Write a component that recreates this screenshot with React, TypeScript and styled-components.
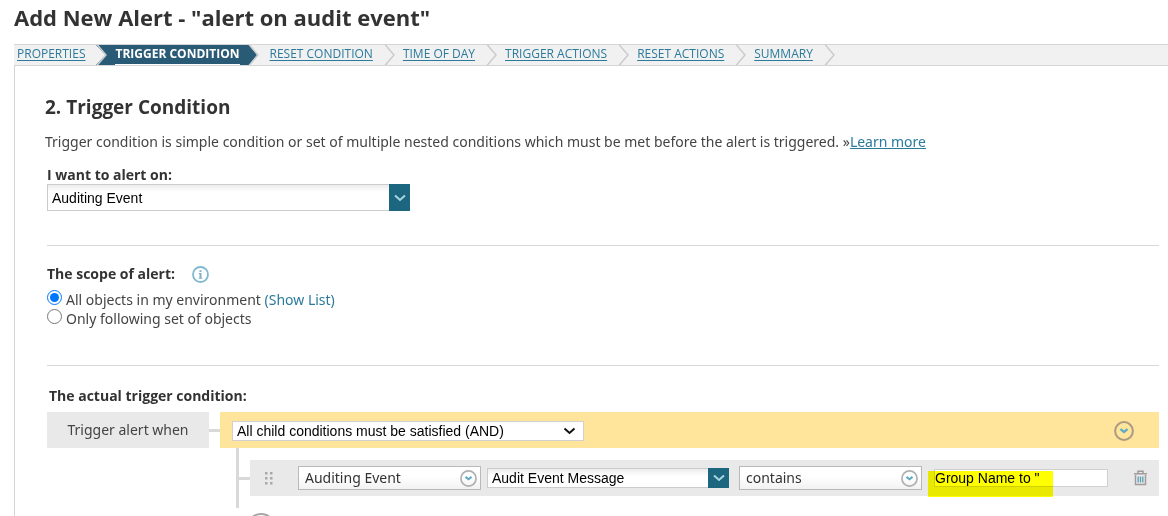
import React from "react";
import styled, { createGlobalStyle } from "styled-components";

const Global = createGlobalStyle`
  * { box-sizing: border-box; }
  html { scrollbar-width: none; }
  body {
    margin: 0;
    background: #fff;
    color: #444;
    font-family: "Noto Sans", "Open Sans", sans-serif;
    font-size: 14px;
    line-height: 20px;
  }
  button, input, select { margin: 0; font: inherit; color: inherit; }
  a { color: #2b7a9b; }
`;

const Page = styled.div`
  padding-left: 14px;
`;

const Title = styled.h1`
  margin: 0 0 10px;
  font-family: "Open Sans", sans-serif;
  font-size: 22px;
  line-height: 34px;
  font-weight: 700;
  color: #333;
`;

const Steps = styled.nav`
  display: flex;
  height: 22px;
  background: #f1f1f1;
  border-top: 1px solid #d5d5d5;
  border-bottom: 1px solid #d5d5d5;
  font-family: "Open Sans", sans-serif;
`;

const Step = styled.div<{ $active?: boolean }>`
  display: flex;
  font-size: 12px;
  line-height: 18px;
  padding-left: 8px;
  background: ${(p) => (p.$active ? "#2a5b76" : "transparent")};
  &:first-child { padding-left: 3px; }
  svg {
    display: block;
    margin-left: ${(p) => (p.$active ? 8 : 11)}px;
  }
`;

const StepLink = styled.a<{ $active?: boolean }>`
  color: ${(p) => (p.$active ? "#fff" : "#2b7a9b")};
  font-weight: ${(p) => (p.$active ? 700 : 400)};
  text-decoration: ${(p) => (p.$active ? "none" : "underline")};
  text-underline-offset: 2px;
  white-space: nowrap;
  ${(p) => p.$active && "border-bottom: 1px solid #fff;"}
`;

const Panel = styled.main`
  border-left: 1px solid #d5d5d5;
  padding: 27px 9px 0 32px;
`;

const Heading = styled.h2`
  margin: 0 0 11px -2px;
  font-family: "Open Sans", sans-serif;
  font-size: 19px;
  line-height: 28px;
  font-weight: 700;
  color: #333;
`;

const Intro = styled.p`
  margin: 0 0 14px -2px;
`;

const Section = styled.section<{ $height?: number }>`
  min-height: ${(p) => p.$height ?? 0}px;
  border-bottom: ${(p) => (p.$height ? "1px solid #d9d9d9" : "none")};
`;

const Label = styled.label`
  display: block;
  font-family: "Open Sans", sans-serif;
  font-weight: 700;
  line-height: 18px;
  color: #333;
`;

const ConditionLabel = styled(Label)`
  padding: 21px 0 0 2px;
`;

const Combo = styled.div<{ $compact?: boolean }>`
  display: flex;
  width: ${(p) => (p.$compact ? 242 : 363)}px;
  height: ${(p) => (p.$compact ? 20 : 27)}px;
`;

const ComboInput = styled.input`
  flex: 1;
  min-width: 0;
  padding: 0 4px;
  border: 1px solid #ccc;
  border-right: 0;
  border-radius: 0;
  background: linear-gradient(#ececec, #fff 7px);
  font-family: "Liberation Sans", Arial, sans-serif;
  color: #000;
`;

const ComboButton = styled.button`
  display: flex;
  align-items: center;
  justify-content: center;
  width: 21px;
  padding: 0;
  border: 0;
  background: #1d6680;
`;

const Scope = styled.fieldset`
  margin: 0;
  padding: 19px 0 0;
  border: 0;
`;

const ScopeTitle = styled.div`
  display: flex;
  align-items: center;
  gap: 17px;
  height: 18px;
  margin-bottom: 7px;
  font-family: "Open Sans", sans-serif;
  font-weight: 700;
  color: #333;
`;

const Option = styled.div`
  display: flex;
  align-items: flex-start;
  height: 19px;
  gap: 4px;
  a { text-decoration: none; }
  input { width: 15px; height: 15px; accent-color: #0075ff; }
`;

const Tree = styled.div`
  margin-top: 7px;
`;

const TreeRow = styled.div`
  display: flex;
  align-items: center;
`;

const RootTag = styled.div`
  width: 162px;
  line-height: 36px;
  text-align: center;
  background: #e9e9e9;
`;

const Connector = styled.span`
  flex: none;
  width: 11px;
  height: 3px;
  background: #d9d9d9;
`;

const GroupBar = styled.div`
  display: flex;
  flex: 1;
  align-items: center;
  justify-content: space-between;
  height: 36px;
  padding: 2px 25px 0 12px;
  background: #ffe59c;
`;

const IconButton = styled.button`
  display: flex;
  padding: 0;
  border: 0;
  background: none;
`;

const SelectWrap = styled.div`
  display: grid;
  align-items: center;
  width: 352px;
  height: 20px;
  > * { grid-area: 1 / 1; }
  svg { justify-self: end; margin-right: 8px; pointer-events: none; }
`;

const Select = styled.select`
  appearance: none;
  width: 100%;
  height: 20px;
  padding: 0 4px;
  border: 1px solid #d0d0d0;
  border-radius: 0;
  background: #fff;
  font-family: "Liberation Sans", Arial, sans-serif;
  line-height: 18px;
  color: #000;
`;

const Children = styled.div`
  margin-left: 189px;
  padding: 12px 0;
  border-left: 3px solid #d9d9d9;
`;

const Condition = styled.div`
  display: flex;
  flex: 1;
  align-items: center;
  height: 36px;
  padding: 0 11px 0 14px;
  background: #e9e9e9;
`;

const Fields = styled.div`
  display: flex;
  align-items: center;
  margin: 0 24px 0 25px;
`;

const Picker = styled.button`
  display: flex;
  align-items: center;
  justify-content: space-between;
  width: 183px;
  height: 24px;
  padding: 0 3px 0 6px;
  border: 1px solid #b9b9b9;
  background: linear-gradient(#fff 40%, #f2f2f2);
  color: #333;
`;

const Field = styled.div<{ $gap: number }>`
  padding-left: ${(p) => p.$gap}px;
`;

const Value = styled.div`
  position: relative;
  height: 18px;
  &::after {
    content: "";
    position: absolute;
    left: -6px;
    top: 2px;
    width: 125px;
    height: 26px;
    background: #ff0;
    mix-blend-mode: multiply;
    pointer-events: none;
  }
`;

const ValueInput = styled.input`
  display: block;
  width: 174px;
  height: 18px;
  padding: 0;
  border: 1px solid #d0d0d0;
  background: #fff;
  font-family: "Liberation Sans", Arial, sans-serif;
  color: #000;
`;

const TrashButton = styled(IconButton)`
  margin-left: auto;
`;

const AddButton = styled.button`
  display: flex;
  align-items: center;
  justify-content: center;
  width: 30px;
  height: 30px;
  margin: 5px 0 0 199px;
  padding: 0;
  border: 2px solid #a6a6a6;
  border-radius: 50%;
  background: #fff;
`;

const steps = [
  "PROPERTIES",
  "TRIGGER CONDITION",
  "RESET CONDITION",
  "TIME OF DAY",
  "TRIGGER ACTIONS",
  "RESET ACTIONS",
  "SUMMARY",
];
const activeStep = 1;

function StepArrow({ index }: { index: number }) {
  const toActive = index + 1 === activeStep;
  const active = index === activeStep;
  const width = active ? 14 : 11;
  return (
    <svg width={width} height="20" viewBox={`0 0 ${width} 20`} aria-hidden="true">
      <rect width={width} height="20" fill={toActive ? "#2a5b76" : "#f1f1f1"} />
      {toActive && <path d="M0 0L9.500 10L0 20Z" fill="#f1f1f1" />}
      {active && <path d="M0 0H1L9 10L1 20H0Z" fill="#2a5b76" />}
      <path d="M1 -0.500L10 10L1 20.500" fill="none" stroke="#c9cccf" strokeWidth="1.500" />
    </svg>
  );
}

function Chevron({ color, stroke = 2, width = 12 }: { color: string; stroke?: number; width?: number }) {
  return (
    <svg width={width} height="8" viewBox="0 0 12 8" aria-hidden="true">
      <path d="M1 1.500L6 6L11 1.500" fill="none" stroke={color} strokeWidth={stroke} />
    </svg>
  );
}

function CircleChevron({ size, ring }: { size: number; ring: string }) {
  return (
    <svg width={size} height={size} viewBox="0 0 18 18" aria-hidden="true">
      <circle cx="9" cy="9" r="8" fill="none" stroke={ring} strokeWidth="1.800" />
      <path d="M5.800 7.300L9 9.800L12.200 7.300" fill="none" stroke="#5fabc4" strokeWidth="2.200" />
    </svg>
  );
}

function InfoIcon() {
  return (
    <svg width="17" height="17" viewBox="0 0 17 17" role="img" aria-label="Info">
      <circle cx="8.500" cy="8.500" r="7.500" fill="none" stroke="#7fb9cf" strokeWidth="1.800" />
      <path d="M7.500 4.200H9.500V6H7.500ZM6.800 7H9.500V11.700H10.300V12.700H6.800V11.700H7.500V8H6.800Z" fill="#7fb0c4" />
    </svg>
  );
}

function DragDots() {
  return (
    <svg width="9" height="13" viewBox="0 0 9 13" aria-hidden="true" fill="#a9a9a9">
      {[0, 5, 10].map((y) => (
        <g key={y}>
          <rect x="1" y={y} width="2.500" height="2.500" />
          <rect x="6" y={y} width="2.500" height="2.500" />
        </g>
      ))}
    </svg>
  );
}

function TrashIcon() {
  return (
    <svg width="15" height="16" viewBox="0 0 15 16" aria-hidden="true" fill="none">
      <path d="M5 3V1.200H10V3M1 3.700H14M2.500 5V14.500H12.500V5" stroke="#a39a9a" strokeWidth="1.500" />
      <path d="M5.200 6.500V12.500M7.500 6.500V12.500M9.800 6.500V12.500" stroke="#5b9fb3" strokeWidth="1.300" />
    </svg>
  );
}

export default function App() {
  return (
    <Page>
      <Global />
      <Title>Add New Alert - "alert on audit event"</Title>
      <Steps aria-label="Alert steps">
        {steps.map((name, i) => (
          <Step key={name} $active={i === activeStep}>
            <StepLink href="#" $active={i === activeStep}>{name}</StepLink>
            <StepArrow index={i} />
          </Step>
        ))}
      </Steps>
      <Panel>
        <Heading>2. Trigger Condition</Heading>
        <Intro>
          Trigger condition is simple condition or set of multiple nested conditions which must be met before the
          alert is triggered. »<a href="#">Learn more</a>
        </Intro>
        <Section $height={80}>
          <Label htmlFor="alert-on">I want to alert on:</Label>
          <Combo>
            <ComboInput id="alert-on" defaultValue="Auditing Event" />
            <ComboButton type="button" aria-label="Open list">
              <Chevron color="#a9d5e2" />
            </ComboButton>
          </Combo>
        </Section>
        <Section $height={120}>
          <Scope aria-labelledby="scope-title">
            <ScopeTitle>
              <span id="scope-title">The scope of alert:</span>
              <InfoIcon />
            </ScopeTitle>
            <Option>
              <input type="radio" id="scope-all" name="scope" defaultChecked />
              <span>
                <label htmlFor="scope-all">All objects in my environment</label> <a href="#">(Show List)</a>
              </span>
            </Option>
            <Option>
              <input type="radio" id="scope-set" name="scope" />
              <label htmlFor="scope-set">Only following set of objects</label>
            </Option>
          </Scope>
        </Section>
        <Section>
          <ConditionLabel htmlFor="group-op">The actual trigger condition:</ConditionLabel>
          <Tree>
            <TreeRow>
              <RootTag>Trigger alert when</RootTag>
              <Connector />
              <GroupBar>
                <SelectWrap>
                  <Select id="group-op">
                    <option>All child conditions must be satisfied (AND)</option>
                  </Select>
                  <Chevron color="#111" width={13} />
                </SelectWrap>
                <IconButton type="button" aria-label="Group menu">
                  <CircleChevron size={20} ring="#ac9b80" />
                </IconButton>
              </GroupBar>
            </TreeRow>
            <Children>
              <TreeRow>
                <Connector />
                <Condition>
                  <DragDots />
                  <Fields>
                    <Picker type="button">
                      Auditing Event
                      <CircleChevron size={17} ring="#b0b0b0" />
                    </Picker>
                    <Field $gap={6}>
                      <Combo $compact>
                        <ComboInput aria-label="Field" defaultValue="Audit Event Message" />
                        <ComboButton type="button" aria-label="Open list">
                          <Chevron color="#a9d5e2" />
                        </ComboButton>
                      </Combo>
                    </Field>
                    <Field $gap={10}>
                      <Picker type="button">
                        contains
                        <CircleChevron size={17} ring="#b0b0b0" />
                      </Picker>
                    </Field>
                    <Field $gap={12}>
                      <Value>
                        <ValueInput aria-label="Value" defaultValue={'Group Name to "'} />
                      </Value>
                    </Field>
                  </Fields>
                  <TrashButton type="button" aria-label="Delete condition">
                    <TrashIcon />
                  </TrashButton>
                </Condition>
              </TreeRow>
            </Children>
            <AddButton type="button" aria-label="Add condition">
              <svg width="12" height="12" viewBox="0 0 12 12" aria-hidden="true">
                <path d="M6 1V11M1 6H11" stroke="#4fa9b8" strokeWidth="2" />
              </svg>
            </AddButton>
          </Tree>
        </Section>
      </Panel>
    </Page>
  );
}
